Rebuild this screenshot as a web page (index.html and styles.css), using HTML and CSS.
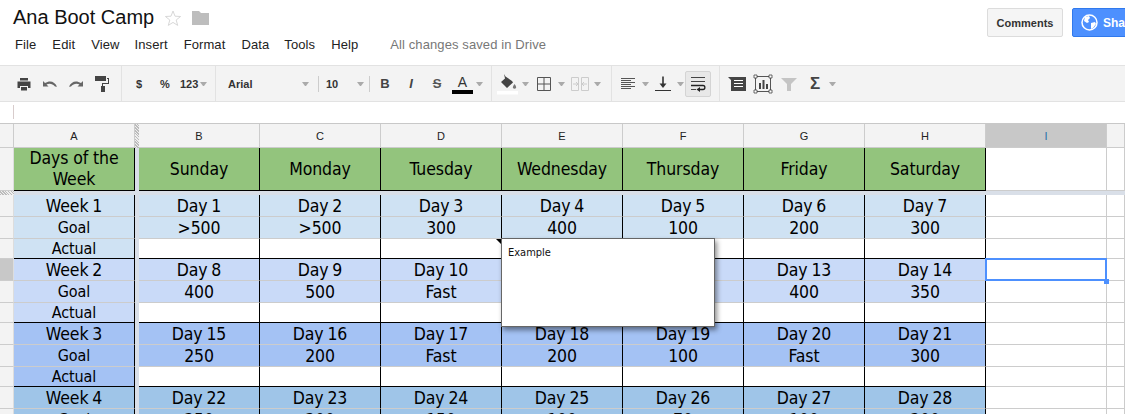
FILE: index.html
```html
<!DOCTYPE html>
<html lang="en">
<head>
<meta charset="utf-8">
<title>Ana Boot Camp</title>
<link rel="stylesheet" href="styles.css">
</head>
<body>
<header class="top">
  <div class="top-left">
    <div class="title-row">
      <h1 class="title">Ana Boot Camp</h1>
      <svg class="star" width="18" height="18" viewBox="0 0 18 18"><path d="M9 2l2 5.200 5.600.3-4.400 3.500 1.500 5.400L9 13.400l-4.700 3 1.500-5.400L1.400 7.500 7 7.200z" fill="#fff" stroke="#d8d8d8"/></svg>
      <svg class="folder" width="17" height="14" viewBox="0 0 17 14"><path d="M0 0h7l2 2h8v12H0z" fill="#bdbdbd"/></svg>
    </div>
    <nav class="menu">
      <span class="m-file">File</span><span class="m-edit">Edit</span><span class="m-view">View</span><span class="m-insert">Insert</span><span class="m-format">Format</span><span class="m-data">Data</span><span class="m-tools">Tools</span><span class="m-help">Help</span>
      <span class="saved">All changes saved in Drive</span>
    </nav>
  </div>
  <div class="actions">
    <button class="btn comments">Comments</button>
    <button class="btn share">
      <svg width="17" height="17" viewBox="0 0 17 17"><circle cx="8.500" cy="8.500" r="7.500" fill="none" stroke="#fff" stroke-width="1.500"/><path d="M4 3l4-1 1 2-2 2 1 2-2 1-3-2zM10 9l4-1 1 2-3 4-2 1z" fill="#fff"/></svg>
      <span>Share</span>
    </button>
  </div>
</header>

<div class="toolbar">
  <div class="group g1">
    <span class="tb"><svg width="20" height="20" viewBox="0 0 20 20"><path d="M6 4h8v2.500H6zM3.500 7.500h13V14H14v-2H6v2H3.500zM7 13h6v3.500H7z" fill="#444"/></svg></span>
    <span class="tb"><svg width="20" height="20" viewBox="0 0 20 20"><path d="M3 7v5.500h5.500l-2-2C9 9 12.500 9.300 15 12.500l2 .3C15 7.500 10 5.800 5 9z" fill="#666"/></svg></span>
    <span class="tb"><svg width="20" height="20" viewBox="0 0 20 20"><path d="M17 7v5.500h-5.500l2-2C11 9 7.500 9.300 5 12.500L3 12.800C5 7.500 10 5.800 15 9z" fill="#666"/></svg></span>
    <span class="tb"><svg width="20" height="20" viewBox="0 0 20 20"><path d="M3 2h11v5H3zM15 4h2v6h-6v2h2v6H9v-6h1V9h6V5h-1z" fill="#444"/></svg></span>
  </div>
  <div class="group g2">
    <span class="tb txt">$</span>
    <span class="tb txt">%</span>
    <span class="num txt">123</span>
    <i class="ar"></i>
  </div>
  <div class="group g3">
    <span class="font-name txt">Arial</span>
    <i class="ar"></i>
    <span class="vsep sep-font"></span>
  </div>
  <div class="group g4">
    <span class="font-size txt">10</span>
    <i class="ar"></i>
    <span class="vsep sep-size"></span>
  </div>
  <div class="group g5">
    <span class="tb fmt b">B</span>
    <span class="tb fmt i">I</span>
    <span class="tb fmt s">S</span>
    <span class="color-a">A</span>
    <i class="ar"></i>
  </div>
  <div class="group g6">
    <span class="tb"><svg width="22" height="22" viewBox="0 0 22 22"><path d="M7 1l1.500 2.500L15 8l1 1.500L10 15l-6-6 4-3.500z" fill="#444"/><path d="M17.500 11c1.500 2 2 3 1.500 4s-2.500 1-3 0 .2-2 1.500-4z" fill="#777"/><rect y="18" width="21" height="3.500" fill="#fff"/></svg></span>
    <i class="ar"></i>
    <span class="tb tb-gap"><svg width="20" height="20" viewBox="0 0 20 20"><path d="M3.500 3.500h13v13h-13zM10 3.500v13M3.500 10h13" fill="none" stroke="#555"/></svg></span>
    <i class="ar"></i>
    <span class="tb tb-gap"><svg width="22" height="20" viewBox="0 0 22 20"><path d="M2.500 3.500h7v13h-7zM12.500 3.500h7v13h-7z" fill="none" stroke="#ccc"/><path d="M4 10h5M7 8l2 2-2 2M18 10h-5M15 8l-2 2 2 2" fill="none" stroke="#ccc"/></svg></span>
    <i class="ar"></i>
  </div>
  <div class="group g7">
    <span class="tb"><svg width="20" height="20" viewBox="0 0 20 20"><path d="M3 4.500h14M3 6.500h10M3 8.500h14M3 10.500h10M3 12.500h14M3 14.500h10" fill="none" stroke="#555"/></svg></span>
    <i class="ar"></i>
    <span class="tb tb-v"><svg width="20" height="20" viewBox="0 0 20 20"><path d="M10 2.500v8" stroke="#333" stroke-width="1.600"/><path d="M6.500 9.500h7L10 14z" fill="#333"/><path d="M2 16.500h16" stroke="#333"/></svg></span>
    <i class="ar"></i>
    <span class="wrap"><svg width="20" height="20" viewBox="0 0 20 20"><path d="M3 3.500h14M3 7.500h14M3 15.500h5" fill="none" stroke="#444"/><path d="M3 11.500h12c2.500 0 2.500 4 0 4h-4" fill="none" stroke="#222" stroke-width="1.300"/><path d="M12 13v5l-3.500-2.500z" fill="#222"/></svg></span>
  </div>
  <div class="group g8">
    <span class="tb"><svg width="20" height="20" viewBox="0 0 20 20"><path d="M1 3h18v14H4V6z" fill="#444"/><path d="M7 6.500h9M7 9.500h9M7 12.500h9" stroke="#fff"/></svg></span>
    <span class="tb"><svg width="20" height="20" viewBox="0 0 20 20"><path d="M2.500 2.500h15v15h-15z" fill="none" stroke="#555"/><path d="M1 1h3v3H1zM16 1h3v3h-3zM1 16h3v3H1zM16 16h3v3h-3z" fill="#fff" stroke="#444" stroke-width=".8"/><path d="M6 9h2v6H6zM9.500 6h2v9h-2zM13 10h2v5h-2z" fill="#444"/></svg></span>
    <span class="tb"><svg width="20" height="20" viewBox="0 0 20 20"><path d="M2 4h16l-6 6v7H8v-7z" fill="#c4c4c4"/></svg></span>
    <span class="tb sigma">Σ</span>
    <i class="ar"></i>
  </div>
</div>

<div class="formula"><span class="caret"></span></div>

<main class="sheet">
  <div class="freeze-col hatch"></div>
  <div class="freeze-col-body"></div>
  <div class="freeze-row"><span class="hatch hatch-row"></span></div>

  <div class="ch"></div><div class="ch">A</div><div class="ch">B</div><div class="ch">C</div><div class="ch">D</div><div class="ch">E</div><div class="ch">F</div><div class="ch">G</div><div class="ch">H</div><div class="ch sel">I</div><div class="ch"></div>

  <div class="rh rh-head"></div><div class="c green head">Days of the Week</div><div class="c green head">Sunday</div><div class="c green head">Monday</div><div class="c green head">Tuesday</div><div class="c green head">Wednesday</div><div class="c green head">Thursday</div><div class="c green head">Friday</div><div class="c green head">Saturday</div><div class="e"></div><div class="e"></div>

  <div class="rh"></div><div class="c r1">Week 1</div><div class="c r1">Day 1</div><div class="c r1">Day 2</div><div class="c r1">Day 3</div><div class="c r1">Day 4</div><div class="c r1">Day 5</div><div class="c r1">Day 6</div><div class="c r1">Day 7</div><div class="e"></div><div class="e"></div>
  <div class="rh"></div><div class="c r1 sm">Goal</div><div class="c r1">&gt;500</div><div class="c r1">&gt;500</div><div class="c r1">300</div><div class="c r1">400</div><div class="c r1">100</div><div class="c r1">200</div><div class="c r1">300</div><div class="e"></div><div class="e"></div>
  <div class="rh"></div><div class="c r1 sm end">Actual</div><div class="c end"></div><div class="c end"></div><div class="c end note"><span class="mark"></span></div><div class="c end"></div><div class="c end"></div><div class="c end"></div><div class="c end"></div><div class="e"></div><div class="e"></div>

  <div class="rh sel"></div><div class="c r2">Week 2</div><div class="c r2">Day 8</div><div class="c r2">Day 9</div><div class="c r2">Day 10</div><div class="c r2">Day 11</div><div class="c r2">Day 12</div><div class="c r2">Day 13</div><div class="c r2">Day 14</div><div class="e active"><span class="handle"></span></div><div class="e"></div>
  <div class="rh"></div><div class="c r2 sm">Goal</div><div class="c r2">400</div><div class="c r2">500</div><div class="c r2">Fast</div><div class="c r2">300</div><div class="c r2">100</div><div class="c r2">400</div><div class="c r2">350</div><div class="e"></div><div class="e"></div>
  <div class="rh"></div><div class="c r2 sm end">Actual</div><div class="c end"></div><div class="c end"></div><div class="c end"></div><div class="c end"></div><div class="c end"></div><div class="c end"></div><div class="c end"></div><div class="e"></div><div class="e"></div>

  <div class="rh"></div><div class="c r3">Week 3</div><div class="c r3">Day 15</div><div class="c r3">Day 16</div><div class="c r3">Day 17</div><div class="c r3">Day 18</div><div class="c r3">Day 19</div><div class="c r3">Day 20</div><div class="c r3">Day 21</div><div class="e"></div><div class="e"></div>
  <div class="rh"></div><div class="c r3 sm">Goal</div><div class="c r3">250</div><div class="c r3">200</div><div class="c r3">Fast</div><div class="c r3">200</div><div class="c r3">100</div><div class="c r3">Fast</div><div class="c r3">300</div><div class="e"></div><div class="e"></div>
  <div class="rh"></div><div class="c r3 sm end">Actual</div><div class="c end"></div><div class="c end"></div><div class="c end"></div><div class="c end"></div><div class="c end"></div><div class="c end"></div><div class="c end"></div><div class="e"></div><div class="e"></div>

  <div class="rh"></div><div class="c r4">Week 4</div><div class="c r4">Day 22</div><div class="c r4">Day 23</div><div class="c r4">Day 24</div><div class="c r4">Day 25</div><div class="c r4">Day 26</div><div class="c r4">Day 27</div><div class="c r4">Day 28</div><div class="e"></div><div class="e"></div>
  <div class="rh"></div><div class="c r4 sm">Goal</div><div class="c r4">250</div><div class="c r4">200</div><div class="c r4">150</div><div class="c r4">100</div><div class="c r4">70</div><div class="c r4">100</div><div class="c r4">200</div><div class="e"></div><div class="e"></div>

  <aside class="popup">Example</aside>
</main>
</body>
</html>
```
FILE: styles.css
```css
* { box-sizing: border-box; }
html, body { margin: 0; height: 414px; overflow: hidden; background: #fff; }
body { font-family: "Liberation Sans", Arial, sans-serif; color: #222; width: 1125px; }

.top { display: flex; height: 65px; }
.top-left { flex: 1; }
.title-row { display: flex; align-items: center; height: 35px; padding-left: 13px; }
.title { margin: 0; font-size: 20px; font-weight: 400; color: #111; line-height: 35px; }
.star { margin-left: 10px; }
.folder { margin-left: 10px; }
.menu { display: flex; align-items: center; height: 18px; font-size: 13px; color: #222; letter-spacing: .1px; }
.menu span { display: block; }
.m-file { margin-left: 15px; }
.m-edit { margin-left: 16px; }
.m-view { margin-left: 16px; }
.m-insert { margin-left: 15px; }
.m-format { margin-left: 16px; }
.m-data { margin-left: 16px; }
.m-tools { margin-left: 15px; }
.m-help { margin-left: 16px; }
.menu .saved { margin-left: 32px; color: #777; }

.actions { display: flex; gap: 9px; padding-top: 8px; margin-right: -36px; flex: none; }
.btn { height: 29px; border-radius: 2px; font: 700 11px "Liberation Sans", Arial, sans-serif; padding: 0; }
.comments { width: 76px; background: #f5f5f5; border: 1px solid #dcdcdc; color: #333; }
.share { width: 89px; background: #4d90fe; border: 1px solid #3079ed; color: #fff; display: flex; align-items: center; gap: 5px; padding-left: 8px; font-size: 12px; }

.toolbar { display: flex; height: 37px; background: #f3f3f3; border-top: 1px solid #e2e2e2; border-bottom: 1px solid #e2e2e2; }
.group { display: flex; align-items: center; flex: none; height: 35px; border-right: 1px solid #e2e2e2; }
.g1 { width: 122px; padding-left: 11px; }
.g2 { width: 94px; padding-left: 4px; }
.g3 { width: 103px; padding-left: 12px; border-right: 0; }
.g4 { width: 51px; padding-left: 7px; border-right: 0; }
.g5 { width: 122px; padding-left: 2px; }
.g6 { width: 120px; padding-left: 3px; }
.g7 { width: 108px; padding-left: 3px; }
.g8 { width: 140px; padding-left: 4px; border-right: 0; }
.tb { width: 26px; height: 24px; display: flex; align-items: center; justify-content: center; flex: none; }
.tb-gap { margin-left: 1px; }
.txt { font-size: 11px; font-weight: 700; color: #333; }
.num { width: 21px; padding-left: 2px; }
.font-name { width: 73px; }
.font-size { width: 30px; }
.ar { display: block; flex: none; width: 7px; height: 0; margin: 0 1px; border: 3.500px solid transparent; border-top: 4px solid #aaa; border-bottom: 0; }
.vsep { display: block; width: 1px; height: 16px; background: #ccc; flex: none; }
.sep-font { margin-left: 8px; }
.sep-size { margin-left: 4px; }
.fmt { font-size: 13px; color: #444; }
.b { font-weight: 700; }
.i { font-style: italic; font-weight: 700; }
.s { text-decoration: line-through; font-weight: 700; color: #555; }
.color-a { width: 21px; height: 19px; text-align: center; font-size: 14px; line-height: 14px; color: #333; border-bottom: 4px solid #000; margin: 2px 2px 0 2px; flex: none; }
.wrap { width: 26px; height: 26px; display: flex; align-items: center; justify-content: center; background: #e8e8e8; border: 1px solid #d4d4d4; border-radius: 2px; flex: none; }
.sigma { font-size: 17px; font-weight: 700; color: #444; }

.formula { height: 22px; padding: 3px 0 0 13px; border-bottom: 1px solid #c8c8c8; }
.caret { display: block; width: 1px; height: 14px; background: #d8cccc; }

.sheet { position: relative; display: grid; grid-template-columns: 14px 121px 4px repeat(8, 121px) 1fr; grid-template-rows: 24px 43px 4px 22px 22px 20px 22px 22px 20px 22px 22px 20px 22px 22px; font-family: "DejaVu Sans Condensed", "DejaVu Sans", sans-serif; font-stretch: condensed; }
.freeze-col { grid-column: 3; grid-row: 1; }
.freeze-col-body { grid-column: 3; grid-row: 2 / -1; background: #d9dfe8; }
.freeze-row { grid-column: 1 / -1; grid-row: 3; background: #d9dfe8; }
.hatch { background: repeating-linear-gradient(45deg, #bbb 0 1px, #eee 1px 2px); }
.hatch-row { display: block; width: 14px; height: 4px; }

.ch { background: #f3f3f3; border-right: 1px solid #ccc; border-bottom: 1px solid #ccc; display: flex; align-items: center; justify-content: center; font: 400 11px "Liberation Sans", Arial, sans-serif; color: #222; }
.ch.sel { background: #c8c8c8; color: #2a6fa8; }
.rh { background: #f3f3f3; border-right: 1px solid #ddd; border-bottom: 1px solid #ccc; }
.rh.sel { background: #c8c8c8; }
.c { border-right: 1px solid #000; border-bottom: 1px solid #ccc; display: flex; align-items: center; justify-content: center; text-align: center; font-size: 17.500px; letter-spacing: -.1px; word-spacing: -1px; line-height: 21px; padding-top: 1px; color: #000; overflow: hidden; }
.e { border-right: 1px solid #ccc; border-bottom: 1px solid #ccc; position: relative; }
.head { border-bottom-color: #000; padding-top: 0; word-spacing: 0; }
.end { border-bottom-color: #000; }
.sm { font-size: 16px; padding-top: 0; word-spacing: 0; }
.green { background: #93c47d; }
.r1 { background: #cfe2f3; }
.r2 { background: #c9daf8; }
.r3 { background: #a4c2f4; }
.r4 { background: #9fc5e8; }

.note { position: relative; overflow: visible; }
.mark { position: absolute; top: 0; right: -1px; border-top: 6px solid #000; border-left: 6px solid transparent; }
.active { border: 2px solid #4d90fe; margin: -1px 0 0 -1px; height: 23px; width: 122px; z-index: 2; }
.handle { position: absolute; right: -4px; bottom: -5px; width: 5px; height: 5px; background: #4d90fe; }

.popup { position: absolute; left: 501px; top: 114px; width: 214px; height: 89px; background: #fff; border: 1px solid #666; box-shadow: 2px 3px 5px rgba(0,0,0,.45); padding: 7px 6px; font-size: 11px; line-height: 14px; color: #111; z-index: 3; }
```
